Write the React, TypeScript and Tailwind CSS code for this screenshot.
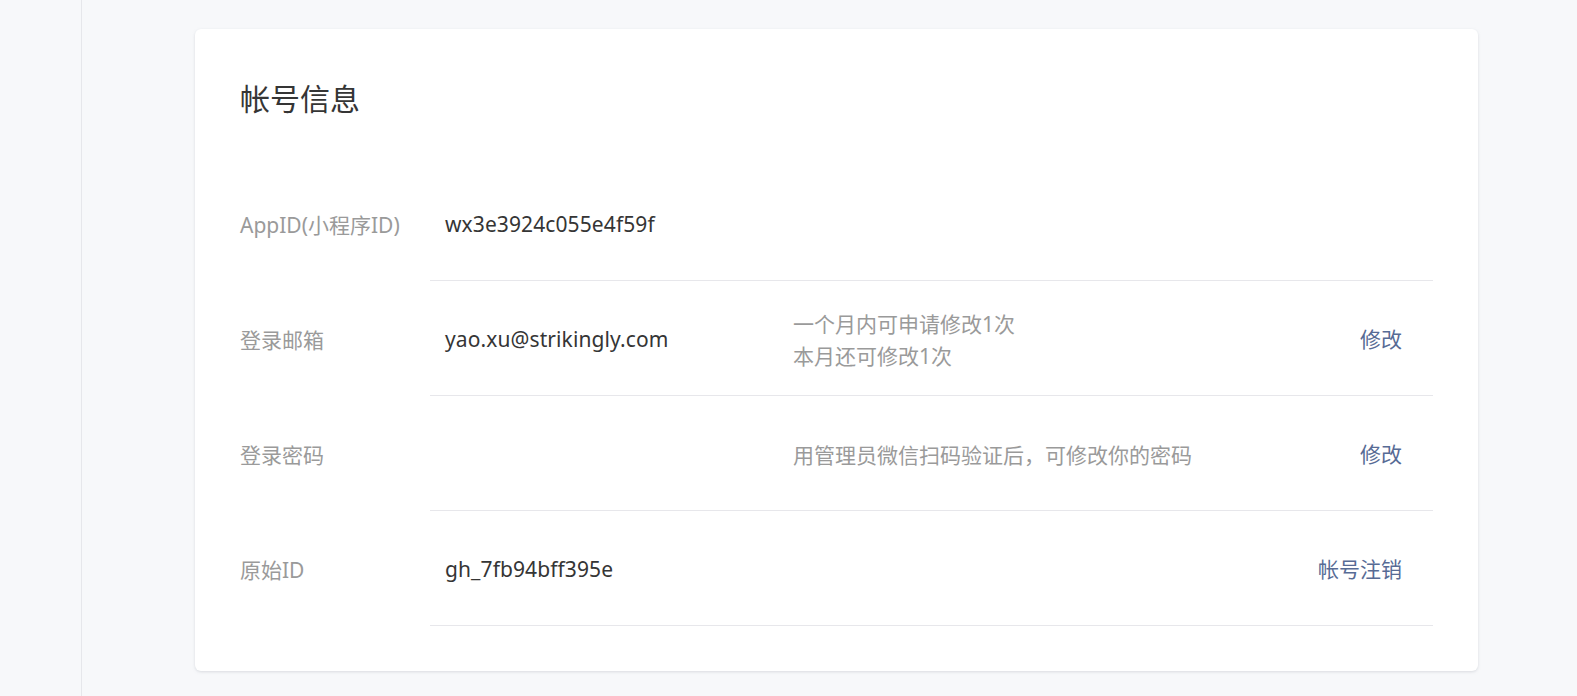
const rows = [
  { label: 'AppID(小程序ID)', value: 'wx3e3924c055e4f59f', notes: [] as string[], action: '' },
  { label: '登录邮箱', value: 'yao.xu@strikingly.com', notes: ['一个月内可申请修改1次', '本月还可修改1次'], action: '修改' },
  { label: '登录密码', value: '', notes: ['用管理员微信扫码验证后，可修改你的密码'], action: '修改' },
  { label: '原始ID', value: 'gh_7fb94bff395e', notes: [] as string[], action: '帐号注销' },
];

export default function App() {
  return (
    <div
      className="flex h-[696px] w-full bg-[#f7f8fa] overflow-hidden"
      style={{ fontFamily: '"Noto Sans", "Noto Sans CJK SC", sans-serif' }}
    >
      <aside className="w-[82px] shrink-0 border-r border-[#e6e7eb] bg-[#f7f8fa]" />

      <main className="flex-1 pl-[113px] pt-[29px]">
        <section className="w-[1283px] rounded-[6px] bg-white px-[45px] pt-[49px] pb-[45px] shadow-[0_1px_3px_rgba(160,165,175,0.35)]">
          <h2 className="text-[30px] leading-[42px] font-normal text-[#353535]">帐号信息</h2>

          <div className="mt-[46px]">
            {rows.map((row) => (
              <div key={row.label} className="flex h-[115px]">
                <div className="flex w-[190px] shrink-0 items-center pt-[4px] text-[21px] text-[#9a9a9a]">
                  {row.label}
                </div>
                <div className="flex flex-1 items-center border-b border-[#e7e7eb] pt-[4px] pl-[15px] pr-[31px]">
                  <div className="w-[348px] shrink-0 text-[21px] tracking-[0.1px] text-[#353535]">{row.value}</div>
                  <div className="flex-1 text-[21px] leading-[32px] text-[#9a9a9a]">
                    {row.notes.map((n) => (
                      <p key={n}>{n}</p>
                    ))}
                  </div>
                  {row.action && (
                    <a href="#" className="text-[21px] text-[#576b95]">
                      {row.action}
                    </a>
                  )}
                </div>
              </div>
            ))}
          </div>
        </section>
      </main>
    </div>
  );
}
